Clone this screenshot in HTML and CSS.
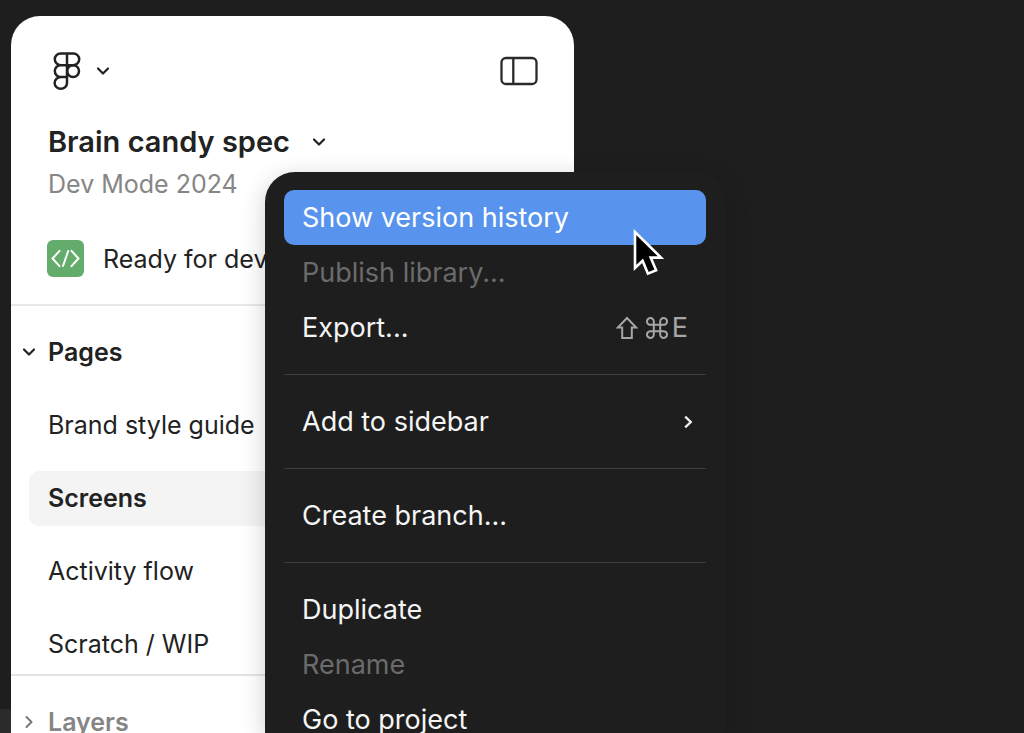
FILE: index.html
```html
<!DOCTYPE html>
<html lang="en">
<head>
<meta charset="utf-8">
<title>Brain candy spec</title>
<link rel="stylesheet" href="styles.css">
</head>
<body>
<div class="app">
  <div class="edge"><div class="edge-block"></div></div>
  <aside class="panel">
    <header class="panel-head">
      <div class="toolbar">
        <button class="icon-btn main-menu" aria-label="Main menu">
          <svg width="28" height="40" viewBox="0 0 28 40" fill="none" stroke="#222" stroke-width="2.5"><path d="M14 2.4H7.7a5.9 5.9 0 0 0 0 11.8H14zM14 2.4h6.3a5.9 5.9 0 0 1 0 11.8H14M14 14.2H7.7a5.9 5.9 0 0 0 0 11.8H14zM7.7 26H14v5.9A6.2 5.9 0 1 1 7.7 26z"/><circle cx="20.1" cy="20.1" r="5.9"/></svg>
          <svg width="14" height="10" viewBox="0 0 14 10" fill="none" stroke="#222" stroke-width="2.2" stroke-linecap="round" stroke-linejoin="round"><path d="M2 2.5l5 5 5-5"/></svg>
        </button>
        <button class="icon-btn" aria-label="Toggle sidebar">
          <svg width="38" height="30" viewBox="0 0 38 30" fill="none" stroke="#2a2a2a" stroke-width="2.3"><rect x="1.5" y="2" width="35" height="26" rx="4.5"/><path d="M13.3 2v26"/></svg>
        </button>
      </div>
      <button class="icon-btn title-btn"><span class="title">Brain candy spec</span>
        <svg width="14" height="10" viewBox="0 0 14 10" fill="none" stroke="#222" stroke-width="2.2" stroke-linecap="round" stroke-linejoin="round"><path d="M2 2.5l5 5 5-5"/></svg>
      </button>
      <p class="project">Dev Mode 2024</p>
      <div class="ready">
        <svg width="37" height="37" viewBox="0 0 37 37" fill="none" stroke="#fff" stroke-width="2"><rect width="37" height="37" rx="6" fill="#64ac6b" stroke="none"/><path d="M12.5 10.8l-7 7.7 7 7.7M24.5 10.8l7 7.7-7 7.7M21.2 11l-5.2 15" stroke-linecap="round"/></svg>
        <span>Ready for dev</span>
      </div>
    </header>
    <section class="pages">
      <button class="icon-btn section-head">
        <svg width="14" height="14" viewBox="0 0 14 14" fill="none" stroke="#222" stroke-width="2.2" stroke-linecap="round" stroke-linejoin="round"><path d="M2 4.5l5 5 5-5"/></svg>
        <span>Pages</span>
      </button>
      <nav class="page-list">
        <a class="page" href="#brand">Brand style guide</a>
        <a class="page current" href="#screens">Screens</a>
        <a class="page" href="#flow">Activity flow</a>
        <a class="page" href="#scratch">Scratch / WIP</a>
      </nav>
    </section>
    <section class="layers">
      <button class="icon-btn section-head muted">
        <svg width="14" height="14" viewBox="0 0 14 14" fill="none" stroke="#777" stroke-width="2" stroke-linecap="round" stroke-linejoin="round"><path d="M4.5 2l5 5-5 5"/></svg>
        <span>Layers</span>
      </button>
    </section>
  </aside>
</div>

<div class="menu" role="menu">
  <button class="item active" role="menuitem">Show version history</button>
  <button class="item" role="menuitem" disabled>Publish library...</button>
  <button class="item" role="menuitem"><span>Export...</span>
    <span class="keys">
      <svg width="22" height="24" viewBox="0 0 22 24" fill="none" stroke="#a6a6a6" stroke-width="2"><path d="M11 2L1.8 11.6h4.4V22h9.6V11.6h4.4z"/></svg>
      <svg width="22" height="24" viewBox="0 0 22 24" fill="none" stroke="#a6a6a6" stroke-width="2"><path d="M7.8 8.8h6.4v6.4H7.8zM7.8 8.8H4.9a3.4 3.4 0 1 1 2.9-3.4zM14.2 8.8V5.4a3.4 3.4 0 1 1 2.9 3.4zM14.2 15.2h2.9a3.4 3.4 0 1 1-2.9 3.4zM7.8 15.2v3.4a3.4 3.4 0 1 1-2.9-3.4z"/></svg>
      <span class="key">E</span>
    </span>
  </button>
  <hr class="rule">
  <button class="item" role="menuitem"><span>Add to sidebar</span>
    <svg width="14" height="14" viewBox="0 0 14 14" fill="none" stroke="#eee" stroke-width="2.3"><path d="M4.2 1.6L9.8 7l-5.6 5.4"/></svg>
  </button>
  <hr class="rule">
  <button class="item" role="menuitem">Create branch...</button>
  <hr class="rule">
  <button class="item" role="menuitem">Duplicate</button>
  <button class="item" role="menuitem" disabled>Rename</button>
  <button class="item" role="menuitem">Go to project</button>
</div>

<svg class="cursor" width="34" height="50" viewBox="0 0 34 50"><path d="M3 3v36l7.6-7.2 5.3 12.8 8.2-3.4-5.4-12.6H29z" fill="#000" stroke="#fff" stroke-width="2.6"/></svg>
</body>
</html>
```

FILE: styles.css
```css
* { box-sizing: border-box; }

body {
  margin: 0;
  height: 100vh;
  overflow: hidden;
  background: #1e1e1e;
  color: #222;
  font: 25px/36px Inter, "Liberation Sans", sans-serif;
}

.app {
  display: flex;
  height: 100%;
}

.edge {
  flex: 0 0 11px;
  display: flex;
  flex-direction: column;
  justify-content: flex-end;
}

.edge-block {
  height: 24px;
  background: #2b2b2b;
}

.panel {
  flex: 0 0 55%;
  margin-top: 16px;
  overflow: hidden;
  background: #fff;
  border-radius: 29px 29px 0 0;
}

.icon-btn {
  display: flex;
  align-items: center;
  padding: 0;
  border: 0;
  background: none;
  color: inherit;
  font: inherit;
}

.panel-head {
  padding: 35px 36px 27px 37px;
  border-bottom: 2px solid #e8e8e8;
}

.toolbar {
  display: flex;
  justify-content: space-between;
  align-items: center;
  height: 40px;
}

.main-menu {
  gap: 15px;
  padding-left: 5px;
}

.title-btn {
  gap: 22px;
  margin-top: 33px;
}

.title {
  font-size: 29px;
  font-weight: 600;
}

.project {
  margin: 6px 0 0;
  color: #868686;
}

.ready {
  display: flex;
  align-items: center;
  gap: 19px;
  margin: 38px 0 0 -1px;
}

.pages {
  padding: 28px 18px 2px;
  border-bottom: 2px solid #e4e4e4;
}

.section-head {
  gap: 12px;
  margin-left: -7px;
  font-weight: 600;
}

.page-list {
  display: flex;
  flex-direction: column;
  gap: 18px;
  margin-top: 28px;
}

.page {
  padding: 9px 19px 10px;
  border-radius: 10px;
  color: inherit;
  text-decoration: none;
}

.current {
  background: #f4f4f4;
  font-weight: 600;
}

.layers {
  padding: 28px 18px;
}

.muted { color: #858585; }

.menu {
  position: absolute;
  top: 172px;
  left: 265px;
  bottom: 0;
  width: 460px;
  padding: 18px 19px 0;
  overflow: hidden;
  border-radius: 30px 30px 0 0;
  background: #1e1e1e;
  box-shadow: 0 6px 24px rgba(0, 0, 0, 0.2);
  font-size: 27px;
}

.item {
  display: flex;
  justify-content: space-between;
  align-items: center;
  width: 100%;
  height: 55px;
  padding: 0 18px;
  border: 0;
  border-radius: 10px;
  background: none;
  color: #f5f5f5;
  font: inherit;
  text-align: left;
}

.item:disabled { color: #6b6b6b; }

.item > svg { margin-right: -7px; }

.active {
  background: #5894ee;
  color: #fff;
}

.keys {
  display: flex;
  align-items: center;
  gap: 8px;
  color: #a6a6a6;
}

.key { margin-left: -4px; }

.rule {
  height: 1px;
  margin: 19px 0;
  border: 0;
  background: #3d3d3d;
}

.cursor {
  position: absolute;
  top: 229px;
  left: 632px;
}
```
